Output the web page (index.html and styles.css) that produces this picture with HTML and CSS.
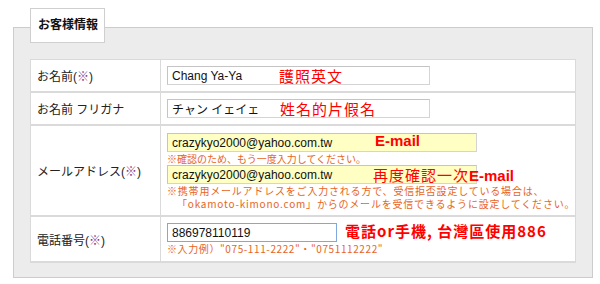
FILE: index.html
```html
<!doctype html>
<html lang="ja">
  <head>
    <meta charset="UTF-8" />
    <title>お客様情報</title>
    <link rel="stylesheet" href="styles.css">
  </head>
  <body>
    <div class="wrap">
      <div class="tab">お客様情報</div>
      <div class="panel">
        <table class="form">
          <colgroup>
            <col class="c-label">
            <col>
          </colgroup>
          <tr class="r1">
            <th>お名前(<span class="req">※</span>)</th>
            <td>
              <div class="field">
                <input class="txt w-name" type="text" value="Chang Ya-Ya">
                <span class="memo m-name">護照英文</span>
              </div>
            </td>
          </tr>
          <tr class="r2">
            <th>お名前 フリガナ</th>
            <td>
              <div class="field">
                <input class="txt w-name" type="text" value="チャン イェイェ">
                <span class="memo m-kana">姓名的片假名</span>
              </div>
            </td>
          </tr>
          <tr class="r3">
            <th>メールアドレス(<span class="req">※</span>)</th>
            <td>
              <div class="field">
                <input class="txt w-mail yellow" type="text" value="crazykyo2000@yahoo.com.tw">
                <span class="memo m-mail"><b>E-mail</b></span>
              </div>
              <p class="note">※確認のため、もう一度入力してください。</p>
              <div class="field">
                <input class="txt w-mail yellow" type="text" value="crazykyo2000@yahoo.com.tw">
                <span class="memo m-mail2">再度確認一次<b>E-mail</b></span>
              </div>
              <p class="note wide">
                <span class="line">※携帯用メールアドレスをご入力される方で、受信拒否設定している場合は、</span>
                <span class="line indent">「okamoto-kimono.com」からのメールを受信できるように設定してください。</span>
              </p>
            </td>
          </tr>
          <tr class="r4">
            <th>電話番号(<span class="req">※</span>)</th>
            <td>
              <div class="field">
                <input class="txt w-tel focus" type="text" value="886978110119">
                <span class="memo m-tel"><b>電話or手機, 台灣區使用886</b></span>
              </div>
              <p class="note tel">※入力例）"075-111-2222"・"0751112222"</p>
            </td>
          </tr>
        </table>
      </div>
    </div>
  </body>
</html>
```

FILE: styles.css
```css
body {
  margin: 0;
  background-color: #ffffff;
  font-family: "Liberation Sans", "Noto Sans CJK JP", sans-serif;
  font-size: 12px;
  color: #222;
}
.wrap {
  padding: 8px 8px 0 13px;
  width: 580px;
}
.tab {
  position: relative;
  z-index: 1;
  margin-left: 17px;
  width: 73px;
  height: 33px;
  margin-bottom: -16px;
  background-color: #ffffff;
  border: 1px solid #cfcfcf;
  font-weight: bold;
  line-height: 32px;
  text-indent: 7px;
  color: #111;
}
.panel {
  background-color: #ececec;
  border: 1px solid #cccccc;
  padding: 31px 15px 14px 16px;
}
.form {
  width: 546px;
  table-layout: fixed;
  border-collapse: collapse;
  background-color: #ffffff;
  border: 1px solid #cfcfcf;
}
.c-label {
  width: 130px;
}
.form th,
.form td {
  border: 1px solid #dadada;
  border-bottom-width: 2px;
  vertical-align: middle;
}
.form th {
  text-align: left;
  font-weight: normal;
  padding: 0 0 0 6px;
  color: #222;
}
.form td {
  padding: 6px;
}
.r3 td {
  padding-top: 7px;
  padding-bottom: 5px;
}
.req {
  color: #8a3a8a;
}
.field {
  position: relative;
}
.txt {
  display: block;
  box-sizing: border-box;
  height: 19px;
  margin: 0;
  padding: 0 4px;
  border: 1px solid #d4d4d4;
  border-top-color: #c4c4c4;
  border-left-color: #c4c4c4;
  font-family: "Liberation Sans", "Noto Sans CJK JP", sans-serif;
  font-size: 12px;
  color: #111;
  background-color: #ffffff;
}
.w-name {
  width: 263px;
}
.w-mail {
  width: 310px;
}
.w-tel {
  width: 170px;
}
.yellow {
  background-color: #ffffc4;
}
.focus {
  border: 1px solid #7fa8dc;
}
.note {
  margin: 0;
  font-family: "Noto Sans CJK JP", sans-serif;
  font-size: 10px;
  line-height: 13px;
  color: #e8641c;
}
.note.wide {
  letter-spacing: 0.8px;
}
.note .line {
  display: block;
  white-space: nowrap;
}
.note.tel {
  letter-spacing: 0.6px;
}
.indent {
  padding-left: 10px;
}
.memo {
  position: absolute;
  top: 1px;
  line-height: 17px;
  white-space: nowrap;
  font-family: "Noto Sans CJK TC", sans-serif;
  font-size: 15px;
  letter-spacing: 1px;
  color: #ff0000;
}
.memo b {
  font-family: "Liberation Sans", "Noto Sans CJK TC", sans-serif;
  letter-spacing: 0;
}
.m-name {
  left: 112px;
}
.m-kana {
  left: 113px;
}
.m-mail {
  left: 208px;
  top: -2px;
}
.m-mail2 {
  left: 206px;
}
.m-tel {
  left: 178px;
  top: -1px;
}
.m-tel b {
  font-family: "Noto Sans CJK TC", sans-serif;
  letter-spacing: 1px;
}
```
